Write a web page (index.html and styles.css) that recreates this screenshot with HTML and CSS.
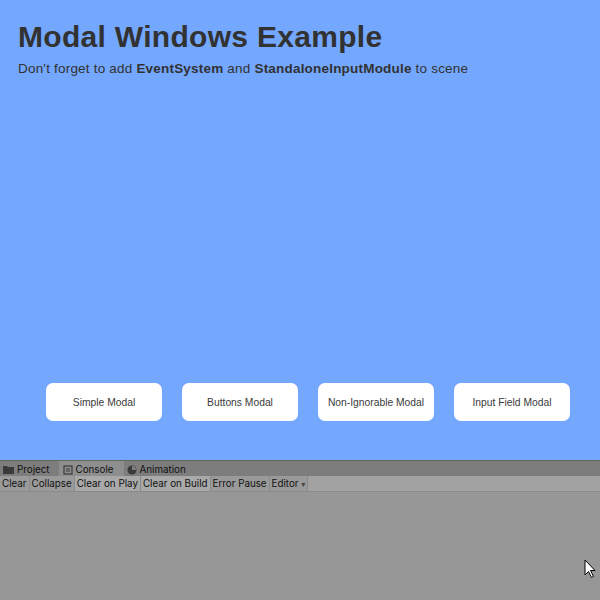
FILE: index.html
```html
<!DOCTYPE html>
<html>
<head>
<meta charset="utf-8">
<link rel="stylesheet" href="styles.css">
</head>
<body>
<div class="scene">
  <header class="header">
    <h1 class="title">Modal Windows Example</h1>
    <p class="subtitle">Don't forget to add <b>EventSystem</b> and <b>StandaloneInputModule</b> to scene</p>
  </header>
  <div class="buttons">
    <div class="btn">Simple Modal</div>
    <div class="btn">Buttons Modal</div>
    <div class="btn">Non-Ignorable Modal</div>
    <div class="btn">Input Field Modal</div>
  </div>
</div>
<div class="panel">
  <div class="tabs">
    <div class="tab">
      <svg class="ico" width="11" height="9" viewBox="0 0 11 9"><path d="M0 1h4l1 1h6v7H0z" fill="#3a3a3a"/></svg>
      <span>Project</span>
    </div>
    <div class="tab active">
      <svg class="ico" width="10" height="10" viewBox="0 0 10 10"><rect x="1" y="1" width="8" height="8" fill="none" stroke="#3a3a3a" stroke-width="1.2"/><path d="M3 4h4M3 6h4" stroke="#3a3a3a"/></svg>
      <span>Console</span>
    </div>
    <div class="tab">
      <svg class="ico" width="10" height="10" viewBox="0 0 10 10"><circle cx="5" cy="5" r="4.5" fill="#3a3a3a"/><path d="M5 5V1A4 4 0 0 1 9 5z" fill="#7e7e7e"/></svg>
      <span>Animation</span>
    </div>
  </div>
  <div class="toolbar">
    <div class="tb">Clear</div>
    <div class="tb">Collapse</div>
    <div class="tb on">Clear on Play</div>
    <div class="tb on">Clear on Build</div>
    <div class="tb">Error Pause</div>
    <div class="tb">Editor <span class="caret">▾</span></div>
    <div class="tb-fill"></div>
  </div>
  <div class="content">
    <svg class="cursor" width="13" height="20" viewBox="0 0 13 20"><path d="M1 1v15l3.5-3.5 3 6 2-1-3-6H11z" fill="#fff" stroke="#000" stroke-width="1"/></svg>
  </div>
</div>
</body>
</html>
```
FILE: styles.css
```css
html, body {
  margin: 0;
  padding: 0;
  width: 600px;
  height: 600px;
  overflow: hidden;
  font-family: "Liberation Sans", Arial, sans-serif;
}
.scene {
  height: 460px;
  background: #74a7fe;
  display: flex;
  flex-direction: column;
  box-sizing: border-box;
}
.header {
  padding: 20px 0 0 18px;
}
.title {
  margin: 0;
  font-size: 30px;
  letter-spacing: 0.3px;
  font-weight: bold;
  color: #323232;
  line-height: 34px;
}
.subtitle {
  margin: 7px 0 0 0;
  font-size: 13.5px;
  letter-spacing: 0.2px;
  color: #323232;
  line-height: 16px;
}
.buttons {
  margin-top: auto;
  margin-bottom: 39px;
  display: flex;
  gap: 20px;
  padding-left: 46px;
}
.btn {
  width: 116px;
  height: 38px;
  background: #fff;
  border-radius: 7px;
  display: flex;
  align-items: center;
  justify-content: center;
  font-size: 10.3px;
  color: #3a3a3a;
}
.panel {
  height: 140px;
  background: #979797;
  border-top: 1px solid #666;
  display: flex;
  flex-direction: column;
  font-family: Inter, "DejaVu Sans", sans-serif;
  font-size: 9.8px;
  color: #111;
}
.tabs {
  height: 15px;
  background: #7d7d7d;
  display: flex;
  align-items: flex-end;
}
.tab {
  height: 15px;
  display: flex;
  align-items: center;
  gap: 3px;
  padding: 2px 9px 0 3px;
  box-sizing: border-box;
}
.tab.active {
  background: #8e8e8e;
  padding: 2px 10px 0 4px;
}
.ico { display: block; }
.toolbar {
  height: 16px;
  display: flex;
  background: #9d9d9d;
  border-bottom: 1px solid #8a8a8a;
  box-sizing: border-box;
}
.tb {
  height: 15px;
  line-height: 15px;
  padding: 0 2px;
  background: #9a9a9a;
  border-right: 1px solid #8a8a8a;
  white-space: nowrap;
}
.tb.on {
  background: #a9a9a9;
}
.caret { font-size: 8px; color: #444; }
.tb-fill {
  flex: 1;
  background: #a2a2a2;
}
.content {
  flex: 1;
  position: relative;
}
.cursor {
  position: absolute;
  left: 584px;
  top: 67px;
}
```
